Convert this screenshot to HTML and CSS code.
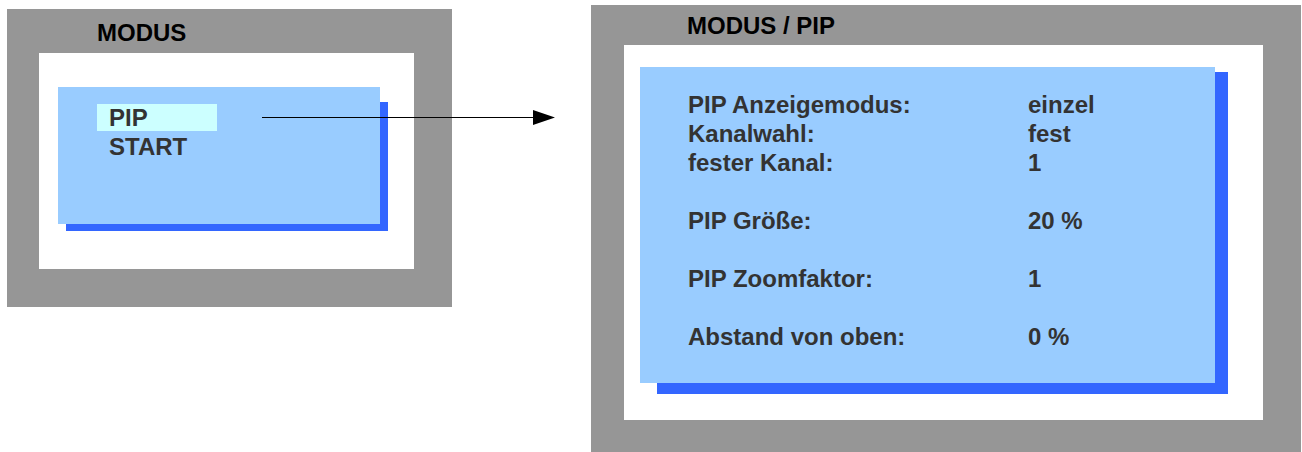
FILE: index.html
```html
<!DOCTYPE html>
<html lang="de">
<head>
    <meta charset="UTF-8">
    <title>Modus / PIP</title>
    <link rel="stylesheet" href="styles.css">
</head>
<body>
    <!-- Hauptmenü -->
    <div class="frame frame-main">
        <div class="frame-title">MODUS</div>
        <div class="frame-body">
            <div class="panel panel-menu">
                <div class="menu-item selected">PIP</div>
                <div class="menu-item">START</div>
            </div>
        </div>
    </div>

    <!-- Pfeil zum Untermenü -->
    <svg class="arrow" width="294" height="17" viewBox="0 0 294 17">
        <line x1="0" y1="8.5" x2="274" y2="8.5" stroke="#000" stroke-width="1"/>
        <polygon points="271,1 293,8.5 271,16" fill="#000"/>
    </svg>

    <!-- Untermenü PIP -->
    <div class="frame frame-pip">
        <div class="frame-title">MODUS / PIP</div>
        <div class="frame-body">
            <div class="panel panel-settings">
                <div class="setting"><span class="setting-label">PIP Anzeigemodus:</span><span>einzel</span></div>
                <div class="setting"><span class="setting-label">Kanalwahl:</span><span>fest</span></div>
                <div class="setting"><span class="setting-label">fester Kanal:</span><span>1</span></div>
                <div class="setting spaced"><span class="setting-label">PIP Größe:</span><span>20 %</span></div>
                <div class="setting spaced"><span class="setting-label">PIP Zoomfaktor:</span><span>1</span></div>
                <div class="setting spaced"><span class="setting-label">Abstand von oben:</span><span>0 %</span></div>
            </div>
        </div>
    </div>
</body>
</html>
```

FILE: styles.css
```css
html, body {
    margin: 0;
    height: 452px;
    overflow: hidden;
}
body {
    position: relative;
    display: flex;
    align-items: flex-start;
    background-color: #fff;
    font-family: 'Liberation Sans', Arial, sans-serif;
    font-weight: bold;
    font-size: 24px;
}

/* Grauer Rahmen */
.frame {
    background-color: #969696;
    display: flex;
    flex-direction: column;
}
.frame-title {
    box-sizing: border-box;
    line-height: 28px;
    color: #000;
}
.frame-body {
    position: relative;
    z-index: 0;
    background-color: #fff;
}

.frame-main {
    width: 445px;
    margin: 9px 0 0 7px;
}
.frame-main .frame-title {
    height: 44px;
    padding: 10px 0 0 90px;
}
.frame-main .frame-body {
    height: 216px;
    margin: 0 38px 38px 32px;
}

.frame-pip {
    width: 710px;
    margin: 5px 0 0 139px;
}
.frame-pip .frame-title {
    height: 40px;
    padding: 7px 0 0 96px;
}
.frame-pip .frame-body {
    height: 375px;
    margin: 0 38px 32px 33px;
}

/* Blaue Tafel mit Schatten */
.panel {
    position: relative;
    box-sizing: border-box;
    background-color: #99ccff;
    color: #333;
}
.panel::before {
    content: "";
    position: absolute;
    z-index: -1;
    background-color: #3366ff;
}

.panel-menu {
    width: 322px;
    height: 137px;
    margin: 34px 0 0 19px;
    padding: 17px 0 0 39px;
}
.panel-menu::before {
    left: 8px;
    top: 15px;
    right: -8px;
    bottom: -7px;
}
.menu-item {
    width: 120px;
    box-sizing: border-box;
    padding-left: 12px;
    line-height: 28px;
    height: 28px;
}
.menu-item.selected {
    background-color: #ccffff;
    height: 27px;
    margin-bottom: 2px;
}

.panel-settings {
    width: 575px;
    height: 316px;
    margin: 22px 0 0 16px;
    padding: 23px 0 0 48px;
}
.panel-settings::before {
    left: 17px;
    top: 5px;
    right: -13px;
    bottom: -11px;
}
.setting {
    display: flex;
    line-height: 29px;
}
.setting.spaced {
    margin-top: 29px;
}
.setting-label {
    width: 340px;
}

/* Pfeil */
.arrow {
    position: absolute;
    left: 262px;
    top: 109px;
}
```
